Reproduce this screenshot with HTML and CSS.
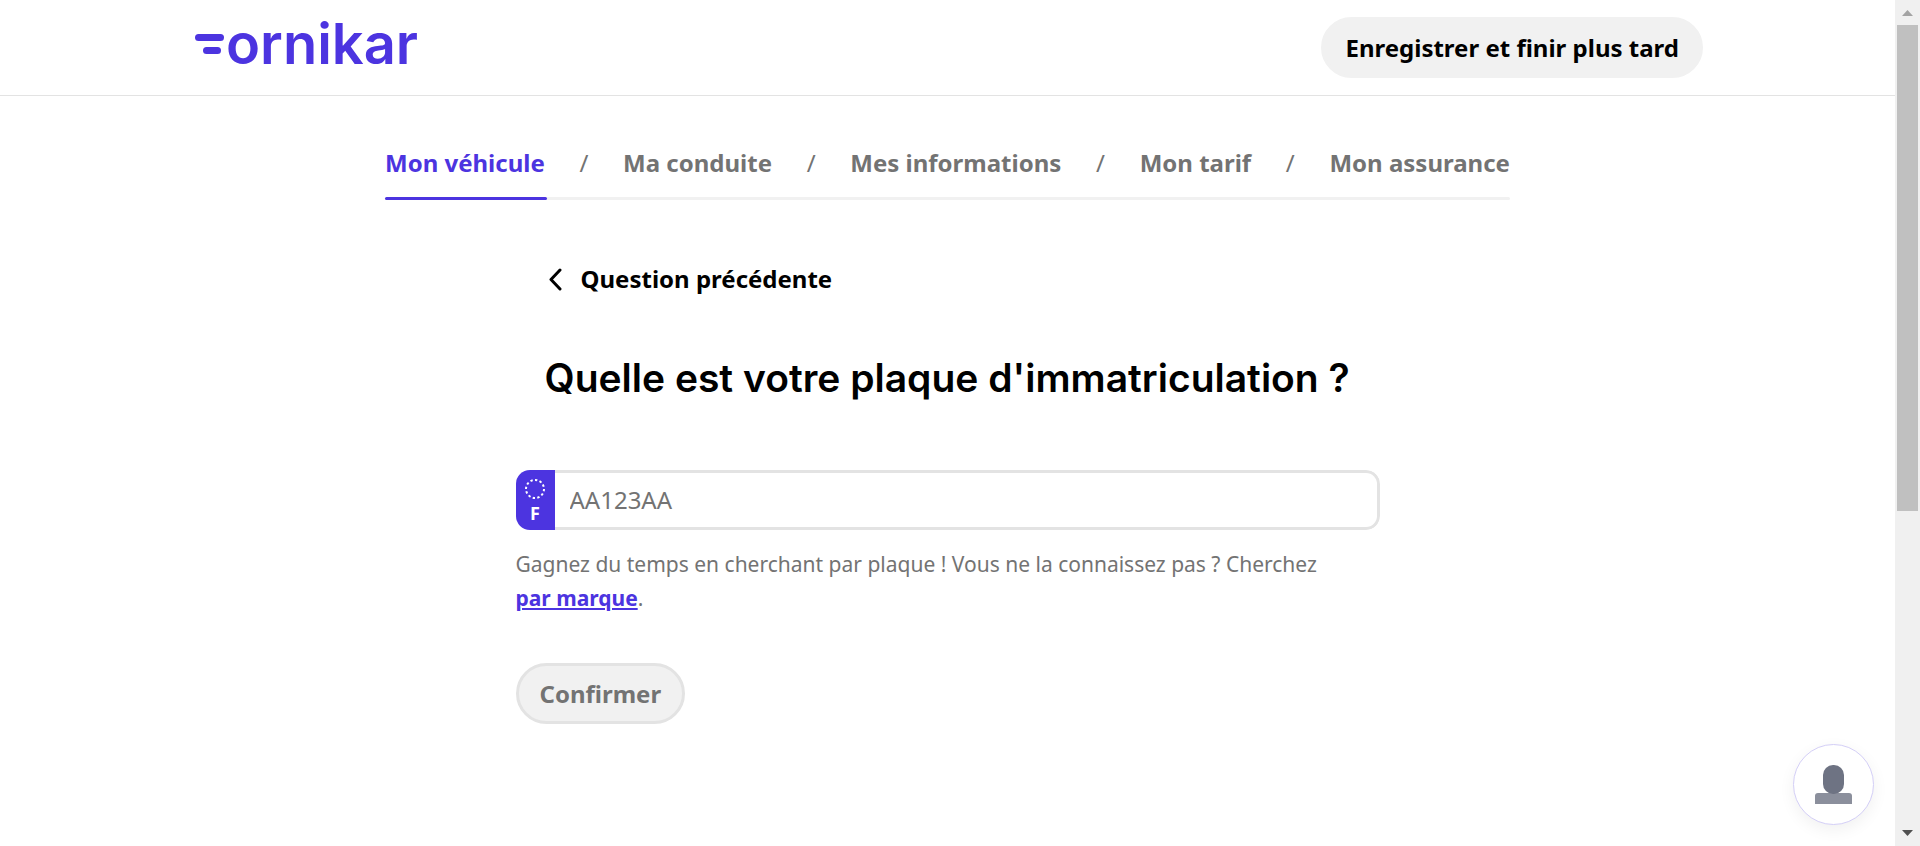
FILE: index.html
```html
<!DOCTYPE html>
<html lang="fr">
<head>
<meta charset="utf-8">
<meta name="viewport" content="width=device-width, initial-scale=1">
<title>Ornikar - Mon véhicule</title>
<link rel="stylesheet" href="styles.css">
</head>
<body class="window">
<div class="page">
  <header class="header">
    <div class="header-inner">
      <a class="logo" href="#" aria-label="Ornikar">
        <svg class="logo-mark" viewBox="0 0 29 20" aria-hidden="true"><rect width="29" height="7" rx="3.5"/><rect x="8" y="13" width="18" height="7" rx="3.5"/></svg>
        <span class="logo-text">ornikar</span>
      </a>
      <button class="btn" type="button">Enregistrer et finir plus tard</button>
    </div>
  </header>

  <nav class="steps" aria-label="Étapes">
    <ol class="step-list">
      <li><a class="step active" href="#" aria-current="step">Mon véhicule</a></li>
      <li class="sep" aria-hidden="true">/</li>
      <li><a class="step" href="#">Ma conduite</a></li>
      <li class="sep" aria-hidden="true">/</li>
      <li><a class="step" href="#">Mes informations</a></li>
      <li class="sep" aria-hidden="true">/</li>
      <li><a class="step" href="#">Mon tarif</a></li>
      <li class="sep" aria-hidden="true">/</li>
      <li><a class="step" href="#">Mon assurance</a></li>
    </ol>
    <div class="progress"><div class="progress-value"></div></div>
  </nav>

  <main class="question">
    <div class="intro">
      <button class="back" type="button">
        <svg class="back-icon" viewBox="0 0 20 24" aria-hidden="true"><path d="M15 3 6 12.500 15 22"/></svg>
        <span>Question précédente</span>
      </button>
      <h1 class="title"><label for="plate">Quelle est votre plaque d'immatriculation ?</label></h1>
    </div>
    <form class="form">
      <div class="plate">
        <span class="plate-badge">
          <svg class="stars" viewBox="0 0 20 20" aria-hidden="true"><circle cx="10" cy="10" r="9" pathLength="24"/></svg>
          <span>F</span>
        </span>
        <input class="plate-input" id="plate" type="text" placeholder="AA123AA">
      </div>
      <p class="hint">Gagnez du temps en cherchant par plaque ! Vous ne la connaissez pas ? Cherchez <a class="link" href="#">par marque</a>.</p>
      <button class="btn btn-disabled" type="submit" disabled>Confirmer</button>
    </form>
  </main>

  <button class="chat" type="button" aria-label="Aide">
    <svg class="chat-icon" viewBox="0 0 38 40" aria-hidden="true"><path class="shoulders" d="M0 39V31Q0 28 3 28H34Q37 28 37 31V39Z"/><rect class="head" x="8" y="0" width="21" height="29" rx="10"/></svg>
  </button>
</div>
<div class="scrollbar" aria-hidden="true">
  <svg class="arrow arrow-up" viewBox="0 0 25 25"><path d="M7 16 12.500 10 18 16Z"/></svg>
  <div class="track"><div class="thumb"></div></div>
  <svg class="arrow arrow-down" viewBox="0 0 25 25"><path d="M7 9 12.500 15 18 9Z"/></svg>
</div>
</body>
</html>
```

FILE: styles.css
```css
* {
  box-sizing: border-box;
}

.window {
  display: flex;
  height: 100vh;
  margin: 0;
  overflow: hidden;
  background: #fff;
  color: #000;
  font-family: "Noto Sans", sans-serif;
  font-size: 24px;
  line-height: 34px;
}

.page {
  position: relative;
  flex: 1;
  min-width: 0;
  overflow: auto;
}

.header {
  padding: 17px 192px;
  border-bottom: 1px solid #e3e3e3;
}

.header-inner {
  display: flex;
  align-items: center;
  justify-content: space-between;
}

.logo {
  display: flex;
  align-items: center;
  gap: 2px;
  padding: 0 0 8px 3px;
  color: #4c34e0;
  text-decoration: none;
}

.logo-mark {
  width: 29px;
  height: 20px;
  fill: currentColor;
}

.logo-text {
  font-family: Inter, sans-serif;
  font-size: 56px;
  font-weight: 600;
  line-height: 52px;
}

.btn {
  height: 61px;
  padding: 0 21px;
  border: 3px solid #f1f1f1;
  border-radius: 31px;
  background: #f1f1f1;
  color: #000;
  font: inherit;
  font-weight: 700;
}

.steps {
  max-width: 1125px;
  margin: 0 auto;
  padding-top: 50px;
}

.step-list {
  display: flex;
  justify-content: space-between;
  margin: 0;
  padding: 0;
  list-style: none;
}

.step {
  color: #737373;
  font-weight: 700;
  text-decoration: none;
}

.step.active {
  color: #4c34e0;
}

.sep {
  color: #737373;
}

.progress {
  height: 3px;
  margin-top: 17px;
  border-radius: 2px;
  background: #f1f1f1;
}

.progress-value {
  width: 162px;
  height: 3px;
  border-radius: 2px;
  background: #4c34e0;
}

.question {
  max-width: 864px;
  margin: 0 auto;
  padding: 62px 0 100px;
}

.intro {
  padding-left: 29px;
}

.back {
  display: flex;
  align-items: center;
  gap: 16px;
  padding: 0;
  border: 0;
  background: none;
  color: #000;
  font: inherit;
  font-weight: 700;
}

.back-icon {
  width: 20px;
  height: 24px;
  fill: none;
  stroke: currentColor;
  stroke-width: 3;
  stroke-linecap: round;
  stroke-linejoin: round;
}

.title {
  margin: 60px 0 70px;
  font-family: Inter, sans-serif;
  font-size: 39px;
  font-weight: 600;
  line-height: 44px;
}

.plate {
  display: flex;
  height: 60px;
  border-radius: 14px;
  overflow: hidden;
}

.plate-badge {
  display: flex;
  flex-direction: column;
  align-items: center;
  gap: 4px;
  width: 39px;
  padding-top: 9px;
  background: #4c34e0;
  color: #fff;
  font-size: 18px;
  font-weight: 700;
  line-height: 20px;
}

.stars {
  width: 20px;
  height: 20px;
  fill: none;
  stroke: #fff;
  stroke-width: 2;
  stroke-dasharray: 1 1;
}

.plate-input {
  flex: 1;
  min-width: 0;
  padding: 0 15px;
  border: 3px solid #e3e3e3;
  border-left: 0;
  border-radius: 0 14px 14px 0;
  background: #fff;
  color: #000;
  font: inherit;
}

.plate-input::placeholder {
  color: #737373;
}

.hint {
  margin: 17px 0 48px;
  color: #737373;
  font-size: 21px;
}

.link {
  color: #4c34e0;
  font-weight: 700;
  white-space: nowrap;
}

.btn-disabled {
  border-color: #e3e3e3;
  color: #737373;
}

.chat {
  position: absolute;
  right: 21px;
  bottom: 21px;
  display: flex;
  align-items: center;
  justify-content: center;
  width: 81px;
  height: 81px;
  padding: 0;
  border: 1px solid #d4cff7;
  border-radius: 50%;
  background: #fff;
  box-shadow: 0 5px 16px rgba(0, 0, 0, 0.06);
}

.chat-icon {
  width: 38px;
  height: 40px;
}

.head {
  fill: #6e7383;
}

.shoulders {
  fill: #8b8f9c;
}

.scrollbar {
  display: flex;
  flex-direction: column;
  width: 25px;
  background: #f0f0f0;
}

.arrow {
  width: 25px;
  height: 25px;
}

.arrow-up {
  fill: #a3a3a3;
}

.arrow-down {
  fill: #505050;
}

.track {
  flex: 1;
  padding: 0 2px;
}

.thumb {
  height: 61%;
  background: #c0c0c0;
}
```
